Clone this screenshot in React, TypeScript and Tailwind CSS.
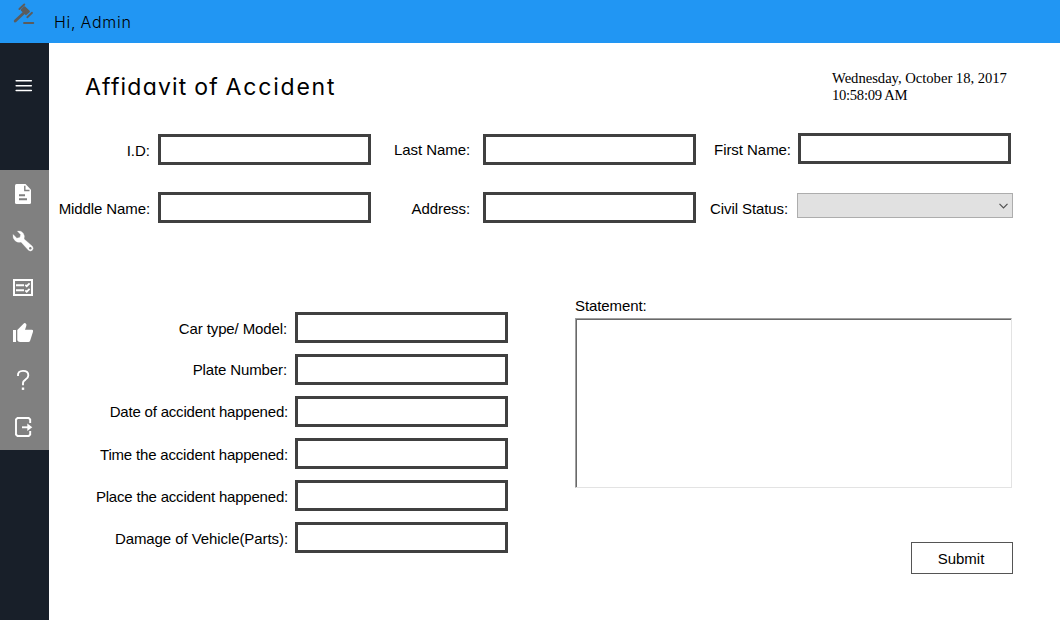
import React from 'react';

function TextField({
  label,
  labelClass,
  inputClass = '',
}: {
  label: string;
  labelClass: string;
  inputClass?: string;
}) {
  return (
    <label className="flex items-start">
      <span className={`whitespace-nowrap text-right text-[15px] leading-[17px] ${labelClass}`}>{label}</span>
      <input
        type="text"
        className={`h-[31px] w-[213px] shrink-0 border-[3px] border-[#404040] bg-white px-1 text-[15px] outline-none ${inputClass}`}
      />
    </label>
  );
}

const vehicleFields = [
  { label: 'Car type/ Model:', labelClass: 'w-[238px] mr-2 pt-2 tracking-[-0.12px]' },
  { label: 'Plate Number:', labelClass: 'w-[238px] mr-2 pt-[7px] tracking-[-0.12px]' },
  { label: 'Date of accident happened:', labelClass: 'w-[239px] mr-[7px] pt-[7px] tracking-[-0.2px]' },
  { label: 'Time the accident happened:', labelClass: 'w-[239px] mr-[7px] pt-2 tracking-[-0.18px]' },
  { label: 'Place the accident happened:', labelClass: 'w-[239px] mr-[7px] pt-2 tracking-[-0.2px]' },
  { label: 'Damage of Vehicle(Parts):', labelClass: 'w-[239px] mr-[7px] pt-2 tracking-[-0.08px]' },
];

function GavelIcon() {
  return (
    <svg width="49" height="43" viewBox="0 0 49 43" fill="none" stroke="#5c5c5c">
      <path d="M19.4 9 24.3 4.5M27.3 17.2 32 12.8" strokeWidth="1.9" strokeLinecap="round" />
      <path d="M24.5 7.2 29 11.5 26 14.2 21.7 10z" fill="#5c5c5c" strokeWidth="1.8" strokeLinejoin="round" />
      <path d="M23.5 13.2 15.2 21" strokeWidth="2.8" strokeLinecap="round" />
      <path d="M24 23h9.3" strokeWidth="1.9" strokeLinecap="round" />
    </svg>
  );
}

function MenuIcon() {
  return (
    <svg width="49" height="127" viewBox="0 0 49 127" fill="none" stroke="#fff" strokeWidth="1.6" strokeLinecap="round">
      <path d="M16.200 37.700H31.300M16.200 42.700H31.300M16.200 47.500H31.300" />
    </svg>
  );
}

function DocumentIcon() {
  return (
    <svg width="49" height="46" viewBox="0 0 49 46" fill="none">
      <path d="M16.5 14h9l5.5 5.8V32.5q0 1.500-1.500 1.500h-13Q15 34 15 32.500V15.500Q15 14 16.500 14z" fill="#fff" />
      <path d="M24.800 15.700v4.800h4.700" stroke="#808080" strokeWidth="1.400" />
      <path d="M19 25.200h6M19 29.300h8" stroke="#808080" strokeWidth="1.900" />
    </svg>
  );
}

function WrenchIcon() {
  return (
    <svg width="49" height="47" viewBox="0 0 49 47" fill="none">
      <path
        d="M17.500 15.200Q21 14.500 23.200 17.300 25 19.800 24 23L32.300 30.300Q34 32.300 32.300 34.200 30.500 35.800 28.500 34.200L21 26Q17.800 27 15.200 24.800 12.500 22.300 13.200 18.600L16.800 22.300 20 21.500 20.700 18.500z"
        fill="#fff"
        stroke="#fff"
        strokeWidth=".4"
      />
      <circle cx="30.300" cy="32.200" r="1.200" fill="#808080" />
    </svg>
  );
}

function ChecklistIcon() {
  return (
    <svg width="49" height="46" viewBox="0 0 49 46" fill="none" stroke="#fff">
      <path d="M14 17h18v15H14z" strokeWidth="2" />
      <path d="M16 22.200H24M16 27.300H24" strokeWidth="1.900" />
      <path d="M25.300 21.900l1.400 1.300 2.900-2.900M25.300 27.400l1.400 1.300 2.900-2.900" strokeWidth="1.800" />
    </svg>
  );
}

function ThumbIcon() {
  return (
    <svg width="49" height="47" viewBox="0 0 49 47" fill="#fff">
      <path d="M13 21h3V33h-3z" />
      <path d="M17.300 21 23.500 14.800Q24.500 13.500 25.800 14.500 26.800 15.300 26.300 17L25 20.800h7Q33.500 21 33 22.800L30.200 31.500Q29.700 33 28.300 33H20Q18 33 17.300 31.300z" />
    </svg>
  );
}

function QuestionIcon() {
  return (
    <svg width="49" height="47" viewBox="0 0 49 47" fill="none" stroke="#fff">
      <path d="M18 20Q17.500 14.900 23 14.900T28.300 19.400Q28.300 21.600 25.500 23.600 23 25.300 23 27V29.300" strokeWidth="1.900" />
      <path d="M21.800 31.500h2.400v2.400h-2.400z" fill="#fff" stroke="none" />
    </svg>
  );
}

function ExitIcon() {
  return (
    <svg width="49" height="47" viewBox="0 0 49 47" fill="none" stroke="#fff">
      <path d="M30.200 20v-3.500L28.700 15H17.500L16 16.500V31.500L17.500 33H28.700L30.200 31.500V28" strokeWidth="1.900" />
      <path d="M22 24.300h6" strokeWidth="1.900" />
      <path d="M27.300 20.600 32.300 24.300 27.300 28z" fill="#fff" stroke="none" />
    </svg>
  );
}

function Sidebar() {
  return (
    <nav className="flex w-[49px] shrink-0 flex-col bg-[#181f29]">
      <button className="h-[127px] w-full" aria-label="Menu">
        <MenuIcon />
      </button>
      <div className="flex h-[280px] flex-col bg-[#808080]">
        <DocumentIcon />
        <WrenchIcon />
        <ChecklistIcon />
        <ThumbIcon />
        <QuestionIcon />
        <ExitIcon />
      </div>
    </nav>
  );
}

export default function App() {
  return (
    <div className="flex h-[620px] w-[1060px] flex-col overflow-hidden bg-white font-['Liberation_Sans',Arial,sans-serif] text-black">
      <header className="flex h-[43px] shrink-0 bg-[#2196f3]">
        <GavelIcon />
        <p className="ml-[5px] mt-3 whitespace-pre font-['Century_Gothic',Inter,sans-serif] text-[16px] font-light leading-5 tracking-[0.7px] [font-feature-settings:'cv11'] [word-spacing:-3px]">
          Hi,  Admin
        </p>
      </header>
      <div className="flex min-h-0 flex-1">
        <Sidebar />
        <main className="flex flex-1 flex-col">
          <div className="flex h-[91px] shrink-0 items-start justify-between pl-9 pr-[52px]">
            <h1 className="mt-7 whitespace-nowrap font-['Century_Gothic',Inter,sans-serif] text-[23px] font-normal leading-8 tracking-[1.2px] [font-feature-settings:'cv11'] [word-spacing:-1px]">
              Affidavit of <span className="tracking-[1.8px]">Accident</span>
            </h1>
            <p className="mt-[27px] w-[176px] whitespace-nowrap font-['Liberation_Serif',serif] text-[14.67px] leading-[17px] tracking-[-0.03px]">
              Wednesday, October 18, 2017
              <br />
              <span className="tracking-[-0.3px]">10:58:09 AM</span>
            </p>
          </div>

          <div className="flex h-[58px] shrink-0">
            <TextField label="I.D:" labelClass="w-[101px] mr-2 pt-2" />
            <TextField label="Last Name:" labelClass="w-[99px] mr-[13px] pt-[7px] tracking-[-0.08px]" />
            <TextField label="First Name:" labelClass="w-[95px] mr-[7px] pt-[7px] tracking-[-0.05px]" inputClass="-mt-px" />
          </div>
          <div className="flex h-[120px] shrink-0">
            <TextField label="Middle Name:" labelClass="w-[101px] mr-2 pt-2 tracking-[-0.1px]" />
            <TextField label="Address:" labelClass="w-[99px] mr-[13px] pt-2 tracking-[-0.1px]" />
            <div className="flex items-start">
              <span className="mr-[9px] w-[92px] whitespace-nowrap pt-2 text-right text-[15px] leading-[17px] tracking-[-0.1px]">
                Civil Status:
              </span>
              <button
                aria-label="Civil Status"
                className="mt-px flex h-[25px] w-[216px] items-center justify-end border border-[#adadad] bg-[#e1e1e1] pr-1"
              >
                <svg width="9" height="6" viewBox="0 0 9 6" fill="none" stroke="#505050" strokeWidth="1.2">
                  <path d="M.5 .8 4.500 4.800 8.500 .8" />
                </svg>
              </button>
            </div>
          </div>

          <div className="flex">
            <div className="flex flex-col gap-[11px]">
              {vehicleFields.map((f) => (
                <TextField key={f.label} label={f.label} labelClass={f.labelClass} />
              ))}
            </div>
            <div className="-mt-[15px] ml-[67px] flex w-[438px] flex-col">
              <label htmlFor="statement" className="text-[15px] leading-[17px] tracking-[-0.1px]">
                Statement:
              </label>
              <div className="mt-1 h-[170px] w-[437px] border border-b-[#e3e3e3] border-l-[#a0a0a0] border-r-[#e3e3e3] border-t-[#a0a0a0]">
                <textarea
                  id="statement"
                  className="block h-full w-full resize-none border-l border-t border-[#696969] bg-white p-1 text-[15px] outline-none"
                />
              </div>
              <button className="mt-[54px] h-8 w-[102px] self-end border border-[#555] bg-white pr-0.5 text-[15px] leading-[17px]">
                Submit
              </button>
            </div>
          </div>
        </main>
      </div>
    </div>
  );
}
